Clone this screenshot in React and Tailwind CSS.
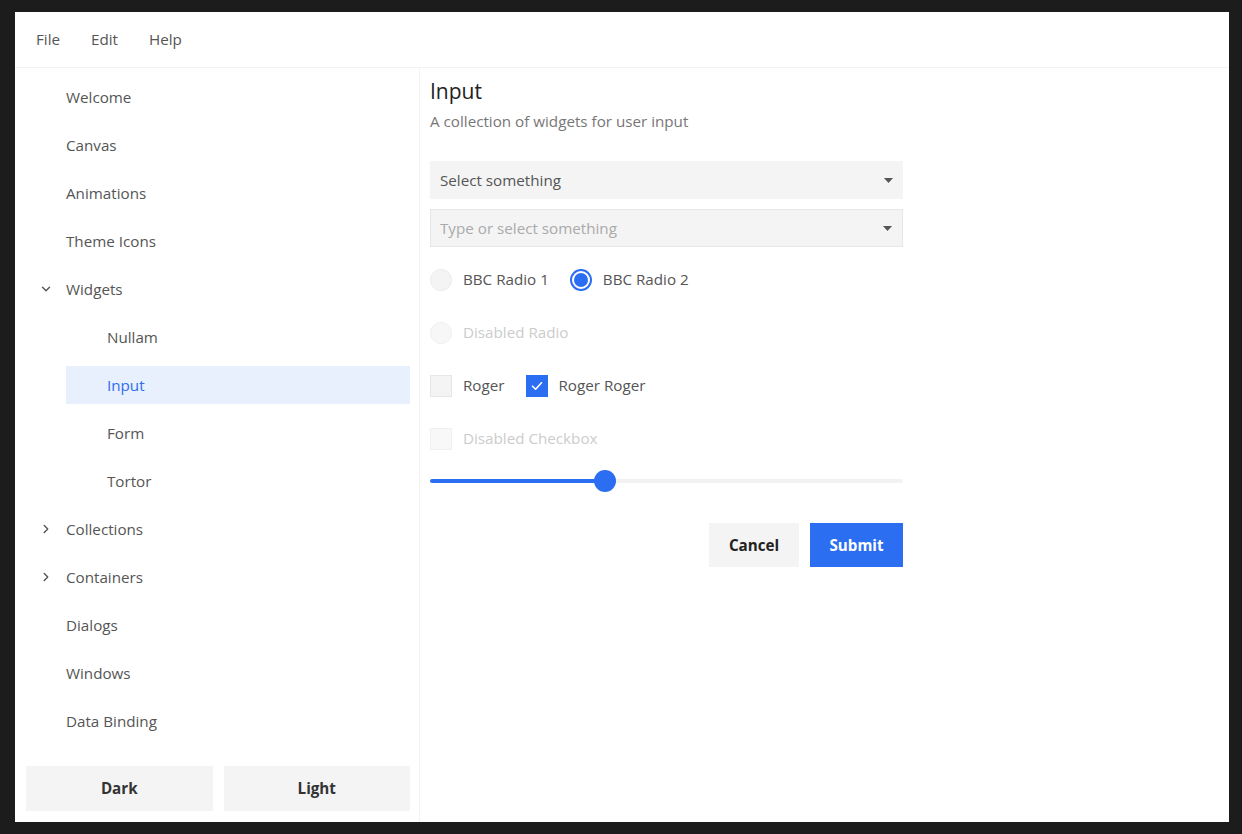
import React from "react";
import { ChevronDown, ChevronRight } from "lucide-react";

const font = { fontFamily: '"Open Sans", "Noto Sans", sans-serif' };

function NavItem({ label, level = 0, chevron, selected }) {
  return (
    <div className="h-[48px] flex items-center">
      <div
        className={
          "h-[38px] flex items-center w-full relative " +
          (selected ? "bg-[#e9f0fd] text-[#2c6ef2] ml-[51px] pl-[41px]" : level === 1 ? "text-[#555555] pl-[92px]" : "text-[#555555] pl-[51px]")
        }
      >
        {chevron === "down" && (
          <ChevronDown className="absolute left-[24px] text-[#555555]" size={14} strokeWidth={2.4} />
        )}
        {chevron === "right" && (
          <ChevronRight className="absolute left-[24px] text-[#555555]" size={14} strokeWidth={2.4} />
        )}
        <span className="text-[15.2px]">{label}</span>
      </div>
    </div>
  );
}

function Caret() {
  return (
    <svg width="9" height="5" viewBox="0 0 9 5" className="mr-[10px]">
      <path d="M0 0 L9 0 L4.5 5 Z" fill="#555555" />
    </svg>
  );
}

export default function App() {
  return (
    <div className="w-full h-screen bg-[#1c1c1c] pt-[12px] pl-[15px] pr-[13px] pb-[12px]" style={font}>
      <div className="w-full h-full bg-white flex flex-col">
        {/* Menu bar */}
        <div className="h-[56px] shrink-0 border-b border-[#f3f3f3] flex items-center pl-[21px] gap-[31px] text-[15.2px] text-[#555555]">
          <span>File</span>
          <span>Edit</span>
          <span>Help</span>
        </div>
        <div className="flex flex-1 min-h-0">
          {/* Sidebar */}
          <div className="w-[405px] shrink-0 border-r border-[#f3f3f3] flex flex-col pr-[9px]">
            <div className="flex-1 pt-[5px]">
              <NavItem label="Welcome" />
              <NavItem label="Canvas" />
              <NavItem label="Animations" />
              <NavItem label="Theme Icons" />
              <NavItem label="Widgets" chevron="down" />
              <NavItem label="Nullam" level={1} />
              <NavItem label="Input" level={1} selected />
              <NavItem label="Form" level={1} />
              <NavItem label="Tortor" level={1} />
              <NavItem label="Collections" chevron="right" />
              <NavItem label="Containers" chevron="right" />
              <NavItem label="Dialogs" />
              <NavItem label="Windows" />
              <NavItem label="Data Binding" />
            </div>
            <div className="flex gap-[11px] pl-[11px] pb-[11px]">
              <button className="flex-1 h-[45px] bg-[#f4f4f4] text-[15.2px] font-bold text-[#333333]">Dark</button>
              <button className="flex-1 h-[45px] bg-[#f4f4f4] text-[15.2px] font-bold text-[#333333]">Light</button>
            </div>
          </div>
          {/* Content */}
          <div className="flex-1 pl-[10px] pt-[10px]">
            <div className="w-[473px] flex flex-col">
              <div className="h-[28px] flex items-center text-[21px] text-[#222222]">Input</div>
              <div className="h-[22px] mt-[4px] flex items-center text-[15.2px] text-[#777777]">A collection of widgets for user input</div>
              <div className="mt-[29px] h-[38px] bg-[#f4f4f4] flex items-center justify-between pl-[10px] text-[15.2px] text-[#555555]">
                <span>Select something</span>
                <Caret />
              </div>
              <div className="mt-[10px] h-[38px] bg-[#f4f4f4] border border-[#e6e6e6] flex items-center justify-between pl-[9px] text-[15.2px] text-[#aaaaaa]">
                <span>Type or select something</span>
                <Caret />
              </div>
              {/* Radios */}
              <div className="mt-[6px] h-[53px] flex items-center">
                <span className="w-[22px] h-[22px] rounded-full bg-[#f4f4f4] border border-[#ebebeb]" />
                <span className="ml-[11px] text-[15.2px] text-[#555555]">BBC Radio 1</span>
                <span className="ml-[21px] w-[22px] h-[22px] rounded-full border-2 border-[#2c6ef2] flex items-center justify-center">
                  <span className="w-[14px] h-[14px] rounded-full bg-[#2c6ef2]" />
                </span>
                <span className="ml-[11px] text-[15.2px] text-[#555555]">BBC Radio 2</span>
              </div>
              <div className="h-[53px] flex items-center">
                <span className="w-[22px] h-[22px] rounded-full bg-[#f7f7f7] border border-[#efefef]" />
                <span className="ml-[11px] text-[15.2px] text-[#cccccc]">Disabled Radio</span>
              </div>
              {/* Checkboxes */}
              <div className="h-[53px] flex items-center">
                <span className="w-[22px] h-[22px] bg-[#f4f4f4] border border-[#e6e6e6]" />
                <span className="ml-[11px] text-[15.2px] text-[#555555]">Roger</span>
                <span className="ml-[21px] w-[22px] h-[22px] bg-[#2c6ef2] flex items-center justify-center">
                  <svg width="14" height="14" viewBox="0 0 14 14">
                    <path d="M2.5 7.2 L5.6 10.2 L11.5 3.8" stroke="white" strokeWidth="1.6" fill="none" strokeLinecap="round" strokeLinejoin="round" />
                  </svg>
                </span>
                <span className="ml-[11px] text-[15.2px] text-[#555555]">Roger Roger</span>
              </div>
              <div className="h-[53px] flex items-center">
                <span className="w-[22px] h-[22px] bg-[#f8f8f8] border border-[#f0f0f0]" />
                <span className="ml-[11px] text-[15.2px] text-[#cccccc]">Disabled Checkbox</span>
              </div>
              {/* Slider */}
              <div className="h-[32px] flex items-center relative">
                <div className="w-full h-[4px] bg-[#f2f2f2] rounded-full">
                  <div className="h-full bg-[#2c6ef2] rounded-full" style={{ width: 175 }} />
                </div>
                <span className="absolute left-[164px] w-[22px] h-[22px] rounded-full bg-[#2c6ef2]" />
              </div>
              {/* Buttons */}
              <div className="mt-[26px] flex justify-end gap-[11px]">
                <button className="w-[90px] h-[44px] bg-[#f4f4f4] text-[15.2px] font-bold text-[#222222]">Cancel</button>
                <button className="w-[93px] h-[44px] bg-[#2c6ef2] text-[15.2px] font-bold text-white">Submit</button>
              </div>
            </div>
          </div>
        </div>
      </div>
    </div>
  );
}
